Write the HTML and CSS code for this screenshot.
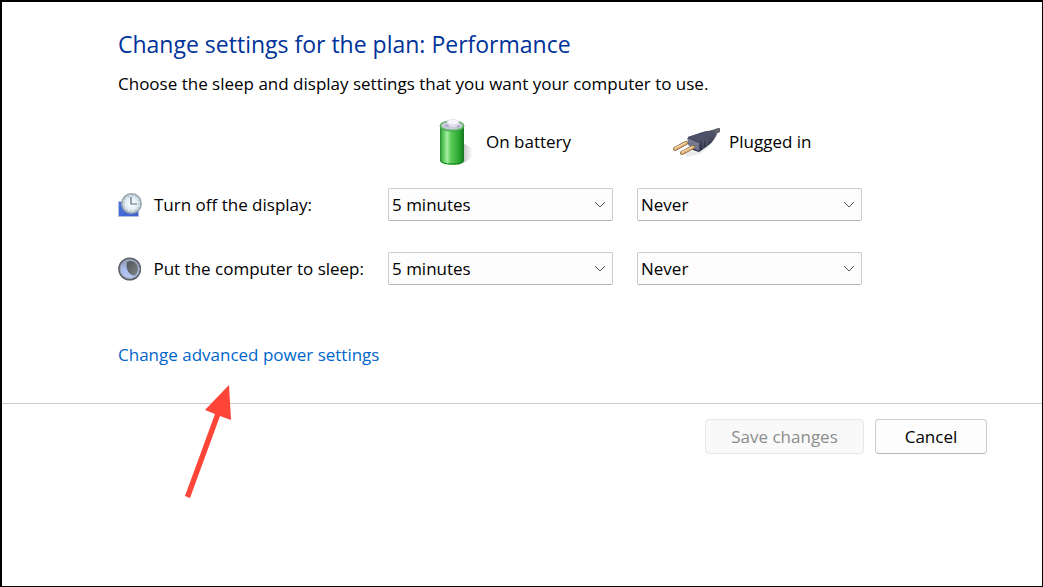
FILE: index.html
```
<!DOCTYPE html>
<html lang="en">
<head>
    <meta charset="utf-8">
    <title>Edit Plan Settings</title>
    <link rel="stylesheet" href="styles.css">
</head>
<body>
    <main class="window">
        <form class="plan-form">
            <div class="content">
                <h1>Change settings for the plan: Performance</h1>
                <p class="intro">Choose the sleep and display settings that you want your computer to use.</p>

                <div class="sources">
                    <div class="source">
                        <svg class="icon-large" viewBox="0 0 48 48" aria-hidden="true">
                            <defs>
                                <linearGradient id="cell">
                                    <stop offset="0" stop-color="#278f30"/>
                                    <stop offset=".13" stop-color="#58c95c"/>
                                    <stop offset=".3" stop-color="#a5eea0"/>
                                    <stop offset=".45" stop-color="#5dcc5b"/>
                                    <stop offset=".8" stop-color="#28a62f"/>
                                    <stop offset="1" stop-color="#13751d"/>
                                </linearGradient>
                                <linearGradient id="cell-shadow">
                                    <stop offset="0" stop-color="#777" stop-opacity=".8"/>
                                    <stop offset="1" stop-color="#aaa" stop-opacity="0"/>
                                </linearGradient>
                            </defs>
                            <path d="M31 24l9 5q5 4 2 9-4 6-14 9z" fill="url(#cell-shadow)"/>
                            <path d="M10 8v35q2 4 12 4t12-4V8z" fill="url(#cell)"/>
                            <path d="M10 8q0 5 12 5t12-5q0-5-12-5t-12 5z" fill="#6fbf76" stroke="#389642" stroke-width=".7"/>
                            <ellipse cx="22" cy="7.500" rx="10.500" ry="4" fill="#c9cbdd"/>
                            <path d="M17 4q0-3 6-3t6 3v3q-6 4-12 0z" fill="#e2e2ee"/>
                            <ellipse cx="23" cy="4" rx="5" ry="2" fill="#f8f8fc"/>
                            <path d="M14 8l4-2 1 3zM27 7l4 1-4 2z" fill="#a7a9c3"/>
                            <path d="M10 42q2 4 12 4t12-4" fill="none" stroke="#17831e"/>
                        </svg>
                        <span>On battery</span>
                    </div>
                    <div class="source">
                        <svg class="icon-large" viewBox="0 0 48 48" aria-hidden="true">
                            <defs>
                                <linearGradient id="plug" x2="0" y2="1">
                                    <stop offset="0" stop-color="#555a70"/>
                                    <stop offset=".5" stop-color="#41465b"/>
                                    <stop offset="1" stop-color="#25283c"/>
                                </linearGradient>
                            </defs>
                            <path d="M12 35l25-7-10 8-14 3z" fill="#ccc" opacity=".4"/>
                            <path d="M36 13l6-2q2-1 5-1v4l-8 4z" fill="#63636b"/>
                            <path d="M15 19l15-5q7-2 12-1l2 3q-3 7-8 11l-10 7-6-2-5-6z" fill="url(#plug)"/>
                            <path d="M14 20l12 5v8l-10-5z" fill="#747990"/>
                            <path d="M15 19l15-5q7-2 11-1L26 24z" fill="#4d5268"/>
                            <path d="M26 24v9M30 22v9M34 20v8" stroke="#6c7188" stroke-width=".7"/>
                            <path d="M2 31l11-6M9 35l11-6" stroke="#6f512f" stroke-width="4" stroke-linecap="round"/>
                            <path d="M2 31l11-6M9 35l11-6" stroke="#dfb077" stroke-width="3" stroke-linecap="round"/>
                            <path d="M2 30l10-5M9 34l10-5" stroke="#ffe7bd" stroke-width="1" stroke-linecap="round"/>
                        </svg>
                        <span>Plugged in</span>
                    </div>
                </div>

                <div class="setting">
                    <label class="setting-name" for="display-battery">
                        <svg class="icon-small" viewBox="0 0 24 24" aria-hidden="true">
                            <defs>
                                <linearGradient id="screen" x2="1" y2="1">
                                    <stop offset="0" stop-color="#4d75dd"/>
                                    <stop offset="1" stop-color="#3c5fd0"/>
                                </linearGradient>
                                <radialGradient id="face">
                                    <stop offset="0" stop-color="#fff"/>
                                    <stop offset=".7" stop-color="#e0ebf2"/>
                                    <stop offset="1" stop-color="#b8cad4"/>
                                </radialGradient>
                            </defs>
                            <path d="M.5 8.500h20v15H.5z" fill="url(#screen)" stroke="#b2bfe0"/>
                            <circle cx="13.500" cy="10.500" r="9.700" fill="url(#face)" stroke="#9ba6ad" stroke-width="1.500"/>
                            <circle cx="13.500" cy="10.500" r="7.500" fill="none" stroke="#8da0ad" stroke-dasharray="1 2.930"/>
                            <path d="M13 4v7h6" fill="none" stroke="#4c687e" stroke-width="1.200"/>
                        </svg>
                        Turn off the display:
                    </label>
                    <div class="picker">
                        <select id="display-battery"><option>5 minutes</option><option>Never</option></select>
                        <svg class="chevron" viewBox="0 0 12 8" aria-hidden="true"><path d="M1 1l5 5 5-5"/></svg>
                    </div>
                    <div class="picker">
                        <select id="display-plugged" aria-label="Turn off the display, plugged in"><option>Never</option><option>5 minutes</option></select>
                        <svg class="chevron" viewBox="0 0 12 8" aria-hidden="true"><path d="M1 1l5 5 5-5"/></svg>
                    </div>
                </div>

                <div class="setting">
                    <label class="setting-name" for="sleep-battery">
                        <svg class="icon-small" viewBox="0 0 24 24" aria-hidden="true">
                            <defs>
                                <linearGradient id="moon" x2="0" y2="1">
                                    <stop offset="0" stop-color="#8b93a8"/>
                                    <stop offset=".5" stop-color="#a9bcf0"/>
                                    <stop offset="1" stop-color="#bccdfa"/>
                                </linearGradient>
                                <linearGradient id="night" x2="1" y2="1">
                                    <stop offset="0" stop-color="#505357"/>
                                    <stop offset="1" stop-color="#818487"/>
                                </linearGradient>
                            </defs>
                            <circle cx="12" cy="12" r="11" fill="url(#moon)" stroke="#5b6068" stroke-width="1.600"/>
                            <circle cx="12" cy="12" r="9.600" fill="none" stroke="#9aa3b5" stroke-width="1"/>
                            <path d="M9 5q6-3 10 2 4 7-2 12-5-1-7-5-2-4-1-9z" fill="url(#night)"/>
                        </svg>
                        Put the computer to sleep:
                    </label>
                    <div class="picker">
                        <select id="sleep-battery"><option>5 minutes</option><option>Never</option></select>
                        <svg class="chevron" viewBox="0 0 12 8" aria-hidden="true"><path d="M1 1l5 5 5-5"/></svg>
                    </div>
                    <div class="picker">
                        <select id="sleep-plugged" aria-label="Put the computer to sleep, plugged in"><option>Never</option><option>5 minutes</option></select>
                        <svg class="chevron" viewBox="0 0 12 8" aria-hidden="true"><path d="M1 1l5 5 5-5"/></svg>
                    </div>
                </div>

                <div class="advanced">
                    <a href="#advanced">Change advanced power settings</a>
                    <svg class="arrow" viewBox="0 0 48 114" aria-hidden="true">
                        <path d="M43 0l2 35-11-4-30 82-5-2 30-82-10-4z" fill="#ff4438"/>
                    </svg>
                </div>
            </div>

            <div class="actions">
                <button type="submit" class="btn btn-save" disabled>Save changes</button>
                <button type="button" class="btn">Cancel</button>
            </div>
        </form>
    </main>
</body>
</html>
```
FILE: styles.css
```
* {
    box-sizing: border-box;
}
body {
    margin: 0;
    background: #fff;
    color: #000;
    font-family: "Open Sans", "Noto Sans", sans-serif;
    font-size: 17px;
    line-height: 24px;
}
.window {
    min-height: 100vh;
    border: solid #000;
    border-width: 2px 1px 1px 2px;
}
.content {
    padding: 26px 116px 36px;
}
h1 {
    margin: 0;
    color: #003399;
    font-size: 23px;
    font-weight: 400;
    line-height: 32px;
}
.intro {
    margin: 12px 0 22px;
}
.sources {
    display: flex;
    gap: 24px;
    padding-left: 312px;
    margin-bottom: 22px;
}
.source {
    display: flex;
    align-items: center;
    gap: 8px;
    flex: 0 0 219px;
}
.icon-large {
    width: 48px;
    height: 48px;
}
.setting {
    display: grid;
    grid-template-columns: 246px minmax(0, 225px) minmax(0, 225px);
    column-gap: 24px;
    align-items: center;
    margin-bottom: 31px;
}
.setting-name {
    display: flex;
    align-items: center;
    gap: 12px;
    white-space: nowrap;
}
.icon-small {
    width: 24px;
    height: 24px;
}
.picker {
    position: relative;
}
select {
    display: block;
    width: 100%;
    height: 33px;
    padding: 0 28px 0 3px;
    border: 1px solid #ccc;
    border-bottom-color: #b5b5b5;
    border-radius: 2px;
    background: #fdfdfd;
    color: #000;
    font: inherit;
    appearance: none;
}
.chevron {
    position: absolute;
    top: 13px;
    right: 7px;
    width: 12px;
    height: 8px;
    fill: none;
    stroke: #555;
    pointer-events: none;
}
.advanced {
    position: relative;
    width: max-content;
    margin-top: 58px;
}
a {
    color: #0066cc;
    text-decoration: none;
}
.arrow {
    position: absolute;
    top: 42px;
    left: 68px;
    width: 48px;
    height: 114px;
    overflow: visible;
    pointer-events: none;
}
.actions {
    display: flex;
    justify-content: flex-end;
    gap: 11px;
    padding: 15px 55px;
    border-top: 1px solid #ccc;
}
.btn {
    min-width: 112px;
    height: 35px;
    padding: 0 24px;
    border: 1px solid #ccc;
    border-bottom-color: #b5b5b5;
    border-radius: 4px;
    background: #fdfdfd;
    color: #000;
    font: inherit;
}
.btn-save {
    min-width: 159px;
    border-color: #e7e7e7;
    background: #f9f9f9;
    color: #8c8c8c;
}
```
